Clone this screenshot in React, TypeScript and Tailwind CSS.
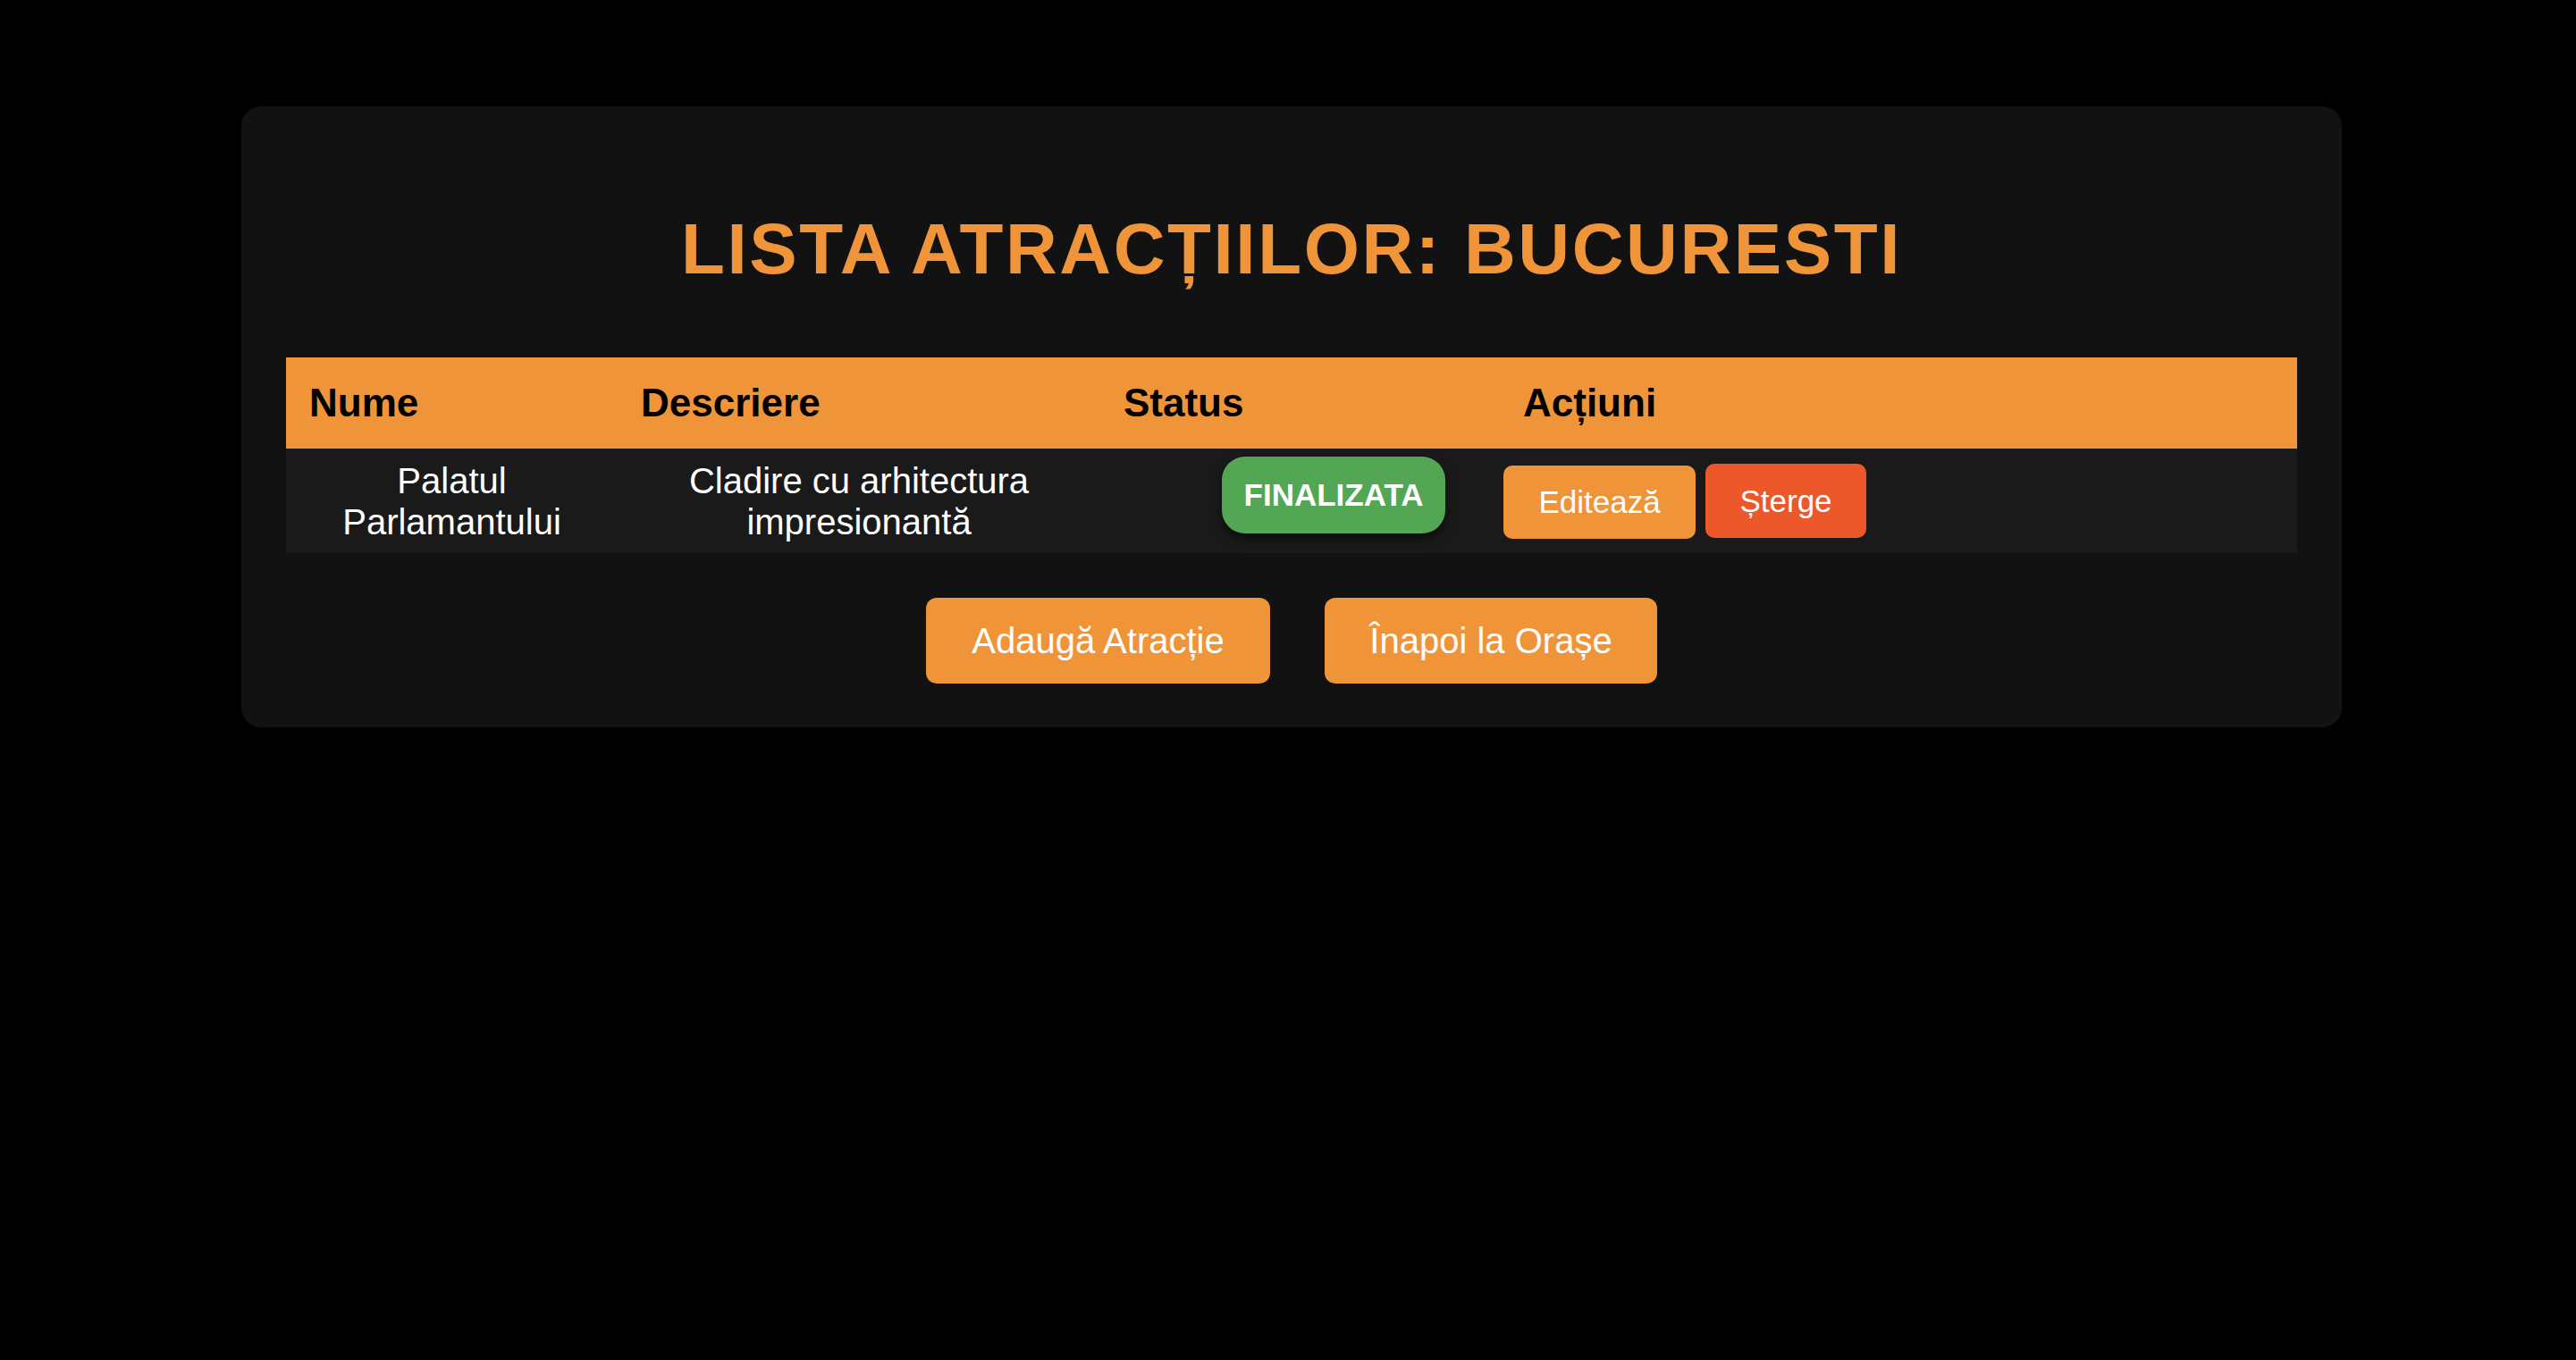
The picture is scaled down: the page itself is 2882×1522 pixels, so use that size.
export default function App() {
  // one attraction row, same as the screenshot
  const atractii = [
    {
      nume: "Palatul Parlamantului",
      descriere: "Cladire cu arhitectura impresionantă",
      status: "FINALIZATA",
    },
  ];

  return (
    <div
      className="min-h-screen w-full bg-black pt-[119px]"
      style={{ fontFamily: '"Liberation Sans", Arial, sans-serif' }}
    >
      <div className="ml-[270px] w-[2350px] rounded-[22px] bg-[#121212] px-[50px] pt-[114px] pb-[49px]">
        {/* Title */}
        <h1 className="text-center text-[80px] leading-[92px] font-bold tracking-[2.6px] text-[#f0943a]">
          LISTA ATRACȚIILOR: BUCURESTI
        </h1>

        {/* Table */}
        <div className="mt-[75px]">
          <div className="grid h-[102px] grid-cols-[371px_540px_447px_1fr] items-center bg-[#f0943a] text-[44px] font-bold text-black">
            <div className="pl-[26px]">Nume</div>
            <div className="pl-[26px]">Descriere</div>
            <div className="pl-[26px]">Status</div>
            <div className="pl-[26px]">Acțiuni</div>
          </div>

          {atractii.map((a) => (
            <div
              key={a.nume}
              className="grid h-[117px] grid-cols-[371px_540px_447px_1fr] bg-[#1a1a1a] text-[40px] leading-[46px] text-white"
            >
              <div className="flex items-center justify-center px-[50px] text-center">{a.nume}</div>
              <div className="flex items-center justify-center px-[60px] text-center">{a.descriere}</div>
              <div className="pl-[136px] pt-[9px]">
                <span className="inline-flex h-[86px] w-[250px] items-center justify-center rounded-[26px] bg-[#53a653] text-[35px] font-bold text-white shadow-[0_6px_12px_rgba(0,0,0,0.55)]">
                  {a.status}
                </span>
              </div>
              <div className="flex items-start gap-[11px] pl-[4px] pt-[17px] text-[35px] leading-[40px]">
                <button className="mt-[2px] h-[82px] w-[215px] rounded-[10px] bg-[#f0943a] text-white">
                  Editează
                </button>
                <button className="h-[83px] w-[180px] rounded-[10px] bg-[#ec582a] text-white">
                  Șterge
                </button>
              </div>
            </div>
          ))}
        </div>

        {/* Bottom buttons */}
        <div className="mt-[50px] flex justify-center gap-[61px] text-[40px] leading-[46px] text-white">
          <button className="h-[96px] w-[385px] rounded-[12px] bg-[#f0943a]">Adaugă Atracție</button>
          <button className="h-[96px] w-[372px] rounded-[12px] bg-[#f0943a]">Înapoi la Orașe</button>
        </div>
      </div>
    </div>
  );
}
